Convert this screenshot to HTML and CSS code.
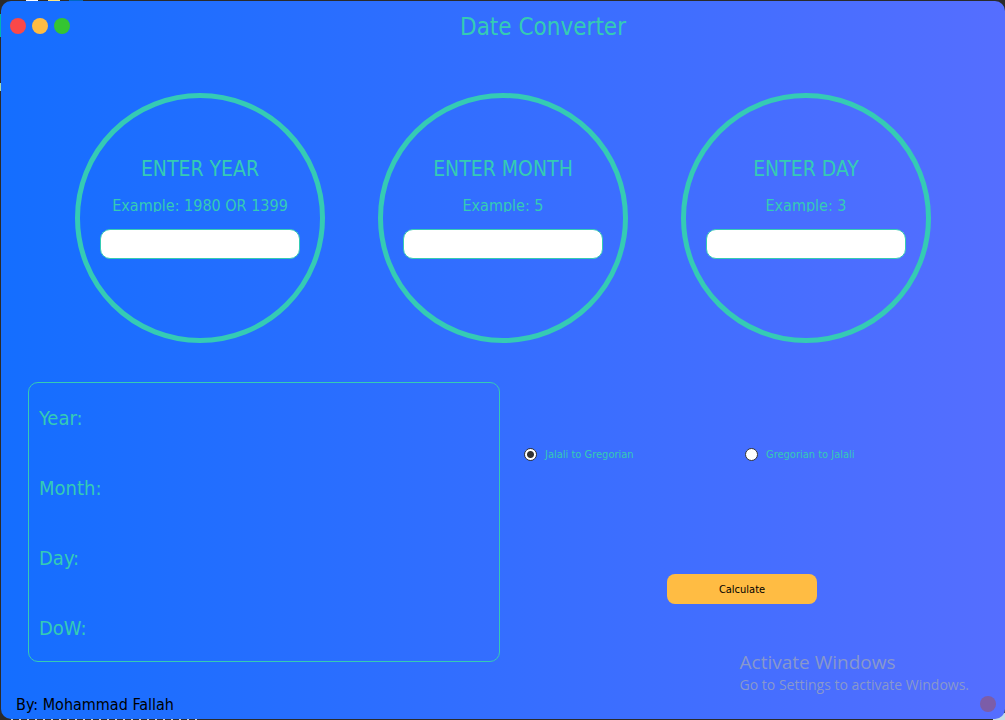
FILE: index.html
```html
<!DOCTYPE html>
<html lang="en">
<head>
<meta charset="utf-8">
<title>Date Converter</title>
<link rel="stylesheet" href="styles.css">
</head>
<body>
<main class="window">
  <header class="titlebar">
    <div class="lights">
      <button class="light light-close" type="button" aria-label="Close"></button>
      <button class="light light-min" type="button" aria-label="Minimize"></button>
      <button class="light light-max" type="button" aria-label="Maximize"></button>
    </div>
    <h1 class="title">Date Converter</h1>
  </header>
  <form class="form">
    <section class="dials">
      <div class="dial">
        <label class="dial-label" for="year">ENTER YEAR</label>
        <p class="dial-hint">Example: 1980 OR 1399</p>
        <input class="dial-input" id="year" type="text">
      </div>
      <div class="dial">
        <label class="dial-label" for="month">ENTER MONTH</label>
        <p class="dial-hint">Example: 5</p>
        <input class="dial-input" id="month" type="text">
      </div>
      <div class="dial">
        <label class="dial-label" for="day">ENTER DAY</label>
        <p class="dial-hint">Example: 3</p>
        <input class="dial-input" id="day" type="text">
      </div>
    </section>
    <section class="lower">
      <div class="results">
        <p class="result">Year:</p>
        <p class="result">Month:</p>
        <p class="result">Day:</p>
        <p class="result">DoW:</p>
      </div>
      <div class="controls">
        <div class="modes">
          <label class="mode"><input class="radio" type="radio" name="mode" checked>Jalali to Gregorian</label>
          <label class="mode"><input class="radio" type="radio" name="mode">Gregorian to Jalali</label>
        </div>
        <button class="calculate" type="button">Calculate</button>
      </div>
    </section>
  </form>
  <footer class="footer">
    <p class="author">By: Mohammad Fallah</p>
    <span class="grip"></span>
  </footer>
  <aside class="watermark">
    <p class="watermark-title">Activate Windows</p>
    <p class="watermark-text">Go to Settings to activate Windows.</p>
  </aside>
</main>
</body>
</html>
```
FILE: styles.css
```css
* {
  box-sizing: border-box;
}

body {
  margin: 0;
  padding: 1px 0 1px 1px;
  min-height: 100vh;
  display: flex;
  font-family: "DejaVu Sans Condensed", "DejaVu Sans", sans-serif;
  color: #35cbb4;
  background:
    linear-gradient(90deg, transparent 26px, #ffffff 26px 38px, transparent 38px 48px, #ffe680 48px 60px, transparent 60px 69px, #0067c0 69px 83px, transparent 83px) 0 0 / 100% 1px no-repeat,
    linear-gradient(transparent 14px, #00b5b0 14px 37px, transparent 37px 83px, #a5dcb4 83px 91px, transparent 91px) 0 0 / 1px 100% no-repeat,
    repeating-linear-gradient(90deg, #2b2b2b 0 3px, #d0d0d0 3px 5px, #2b2b2b 5px 8px) 8px 100% / 192px 1px no-repeat,
    linear-gradient(#c4dde4, #c4dde4) 100% 100% / 12px 7px no-repeat,
    #2b2b2b;
}

p,
h1 {
  margin: 0;
  font-weight: 400;
}

button,
input {
  font-family: inherit;
  margin: 0;
}

.window {
  position: relative;
  flex: 1;
  display: flex;
  flex-direction: column;
  border-radius: 10px;
  background: linear-gradient(90deg, #146eff, #556eff);
}

.titlebar {
  display: flex;
  align-items: center;
  gap: 11px;
  height: 50px;
  padding-left: 9px;
}

.lights {
  display: flex;
  gap: 6px;
}

.light {
  width: 16px;
  height: 16px;
  padding: 0;
  border: 0;
  border-radius: 50%;
}

.light-close {
  background: #fa4848;
}

.light-min {
  background: #ffbc43;
}

.light-max {
  background: #34c532;
}

.title {
  flex: 1;
  padding-top: 2px;
  text-align: center;
  font-size: 24px;
  line-height: 32px;
}

.form {
  flex: 1;
  padding-top: 42px;
}

.dials {
  display: flex;
  justify-content: center;
  gap: 53px;
}

.dial {
  display: flex;
  flex-direction: column;
  align-items: center;
  width: 250px;
  height: 250px;
  padding-top: 57px;
  border: 5px solid #35cbb4;
  border-radius: 50%;
}

.dial-label {
  font-size: 21px;
  line-height: 28px;
}

.dial-hint {
  height: 16px;
  margin-top: 13px;
  overflow: hidden;
  font-size: 16px;
  line-height: 20px;
}

.dial-input {
  width: 200px;
  height: 30px;
  margin-top: 17px;
  padding: 0 10px;
  border: 1px solid #35cbb4;
  border-radius: 10px;
  background: #ffffff;
  font-size: 16px;
}

.lower {
  display: grid;
  grid-template-columns: 472fr 436fr;
  gap: 24px;
  margin-top: 39px;
  padding: 0 45px 0 27px;
}

.results {
  display: grid;
  grid-template-rows: repeat(4, 70px);
  align-items: center;
  height: 280px;
  padding-left: 10px;
  border: 1px solid #35cbb4;
  border-radius: 10px;
}

.result {
  font-size: 20px;
  line-height: 28px;
}

.controls {
  display: flex;
  flex-direction: column;
  align-items: center;
  padding-top: 64px;
}

.modes {
  display: grid;
  grid-template-columns: 1fr 1fr;
  gap: 6px;
  width: 100%;
}

.mode {
  display: flex;
  align-items: center;
  gap: 8px;
  font-size: 11px;
  line-height: 17px;
}

.radio {
  appearance: none;
  width: 13px;
  height: 13px;
  border: 1px solid #333333;
  border-radius: 50%;
  background: #ffffff;
}

.radio:checked {
  background: radial-gradient(circle, #333333 3px, #ffffff 4px);
}

.calculate {
  width: 150px;
  height: 30px;
  margin-top: 111px;
  border: 0;
  border-radius: 8px;
  background: #ffbc43;
  color: #000000;
  font-size: 11px;
}

.footer {
  display: flex;
  align-items: center;
  justify-content: space-between;
  height: 30px;
  padding: 0 9px 0 15px;
}

.author {
  padding-top: 2px;
  color: #000000;
  font-size: 16px;
  line-height: 24px;
}

.grip {
  width: 16px;
  height: 16px;
  border-radius: 50%;
  background: #7c5da8;
}

.watermark {
  position: absolute;
  right: 36px;
  bottom: 24px;
  font-family: "Open Sans", "Noto Sans", sans-serif;
  color: #8898cc;
}

.watermark-title {
  font-size: 19px;
  line-height: 26px;
}

.watermark-text {
  font-size: 14px;
  line-height: 20px;
}
```
